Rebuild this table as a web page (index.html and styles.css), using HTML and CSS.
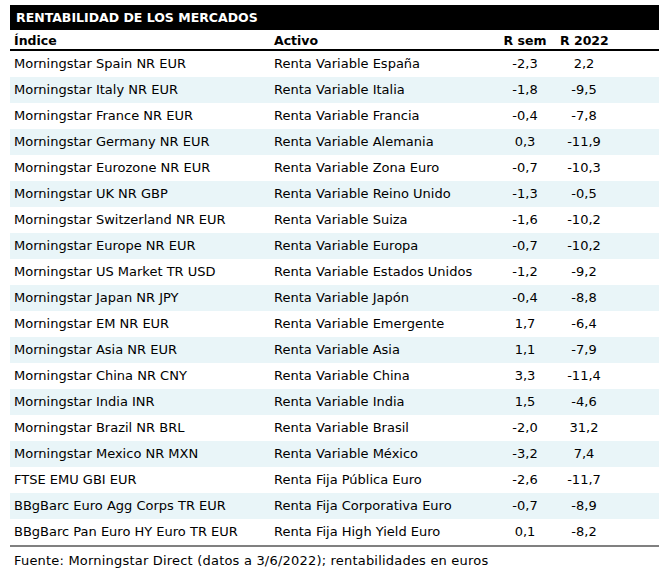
FILE: index.html
```html
<!DOCTYPE html>
<html lang="es">
<head>
<meta charset="utf-8">
<title>Rentabilidad de los mercados</title>
<link rel="stylesheet" href="styles.css">
</head>
<body>
<div class="panel">
  <div class="title">RENTABILIDAD DE LOS MERCADOS</div>
  <div class="row head">
    <span class="c1">Índice</span><span class="c2">Activo</span><span class="c3">R sem</span><span class="c4">R 2022</span>
  </div>
  <div class="body">
    <div class="row"><span class="c1">Morningstar Spain NR EUR</span><span class="c2">Renta Variable España</span><span class="c3">-2,3</span><span class="c4">2,2</span></div>
    <div class="row"><span class="c1">Morningstar Italy NR EUR</span><span class="c2">Renta Variable Italia</span><span class="c3">-1,8</span><span class="c4">-9,5</span></div>
    <div class="row"><span class="c1">Morningstar France NR EUR</span><span class="c2">Renta Variable Francia</span><span class="c3">-0,4</span><span class="c4">-7,8</span></div>
    <div class="row"><span class="c1">Morningstar Germany NR EUR</span><span class="c2">Renta Variable Alemania</span><span class="c3">0,3</span><span class="c4">-11,9</span></div>
    <div class="row"><span class="c1">Morningstar Eurozone NR EUR</span><span class="c2">Renta Variable Zona Euro</span><span class="c3">-0,7</span><span class="c4">-10,3</span></div>
    <div class="row"><span class="c1">Morningstar UK NR GBP</span><span class="c2">Renta Variable Reino Unido</span><span class="c3">-1,3</span><span class="c4">-0,5</span></div>
    <div class="row"><span class="c1">Morningstar Switzerland NR EUR</span><span class="c2">Renta Variable Suiza</span><span class="c3">-1,6</span><span class="c4">-10,2</span></div>
    <div class="row"><span class="c1">Morningstar Europe NR EUR</span><span class="c2">Renta Variable Europa</span><span class="c3">-0,7</span><span class="c4">-10,2</span></div>
    <div class="row"><span class="c1">Morningstar US Market TR USD</span><span class="c2">Renta Variable Estados Unidos</span><span class="c3">-1,2</span><span class="c4">-9,2</span></div>
    <div class="row"><span class="c1">Morningstar Japan NR JPY</span><span class="c2">Renta Variable Japón</span><span class="c3">-0,4</span><span class="c4">-8,8</span></div>
    <div class="row"><span class="c1">Morningstar EM NR EUR</span><span class="c2">Renta Variable Emergente</span><span class="c3">1,7</span><span class="c4">-6,4</span></div>
    <div class="row"><span class="c1">Morningstar Asia NR EUR</span><span class="c2">Renta Variable Asia</span><span class="c3">1,1</span><span class="c4">-7,9</span></div>
    <div class="row"><span class="c1">Morningstar China NR CNY</span><span class="c2">Renta Variable China</span><span class="c3">3,3</span><span class="c4">-11,4</span></div>
    <div class="row"><span class="c1">Morningstar India INR</span><span class="c2">Renta Variable India</span><span class="c3">1,5</span><span class="c4">-4,6</span></div>
    <div class="row"><span class="c1">Morningstar Brazil NR BRL</span><span class="c2">Renta Variable Brasil</span><span class="c3">-2,0</span><span class="c4">31,2</span></div>
    <div class="row"><span class="c1">Morningstar Mexico NR MXN</span><span class="c2">Renta Variable México</span><span class="c3">-3,2</span><span class="c4">7,4</span></div>
    <div class="row"><span class="c1">FTSE EMU GBI EUR</span><span class="c2">Renta Fija Pública Euro</span><span class="c3">-2,6</span><span class="c4">-11,7</span></div>
    <div class="row"><span class="c1">BBgBarc Euro Agg Corps TR EUR</span><span class="c2">Renta Fija Corporativa Euro</span><span class="c3">-0,7</span><span class="c4">-8,9</span></div>
    <div class="row"><span class="c1">BBgBarc Pan Euro HY Euro TR EUR</span><span class="c2">Renta Fija High Yield Euro</span><span class="c3">0,1</span><span class="c4">-8,2</span></div>
  </div>
  <div class="source">Fuente: Morningstar Direct (datos a 3/6/2022); rentabilidades en euros</div>
</div>
</body>
</html>
```

FILE: styles.css
```css
html, body {
  margin: 0;
  padding: 0;
  background: #ffffff;
}

body {
  font-family: "DejaVu Sans", Verdana, sans-serif;
  font-size: 13px;
  color: #000000;
}

.panel {
  width: 649px;
  margin: 5px 0 0 10px;
}

.title {
  height: 25px;
  line-height: 25px;
  background: #000000;
  color: #ffffff;
  font-weight: bold;
  font-size: 12.5px;
  padding-left: 6px;
  white-space: nowrap;
}

.row {
  display: grid;
  grid-template-columns: 260px 220px 70px 48px 1fr;
  height: 26px;
  line-height: 26px;
  white-space: nowrap;
}

.row .c1,
.row .c2 {
  padding-left: 4px;
}

.row .c3,
.row .c4 {
  text-align: center;
}

.head {
  height: 17px;
  line-height: 17px;
  padding-top: 2px;
  font-weight: bold;
  font-size: 12.5px;
  border-bottom: 2px solid #000000;
}

.body {
  border-bottom: 2px solid #808080;
}

.body .row:nth-child(even) {
  background: #e9f5f8;
}

.source {
  margin-top: 4px;
  padding-left: 4px;
  line-height: 20px;
  letter-spacing: 0.2px;
  white-space: nowrap;
}
```
